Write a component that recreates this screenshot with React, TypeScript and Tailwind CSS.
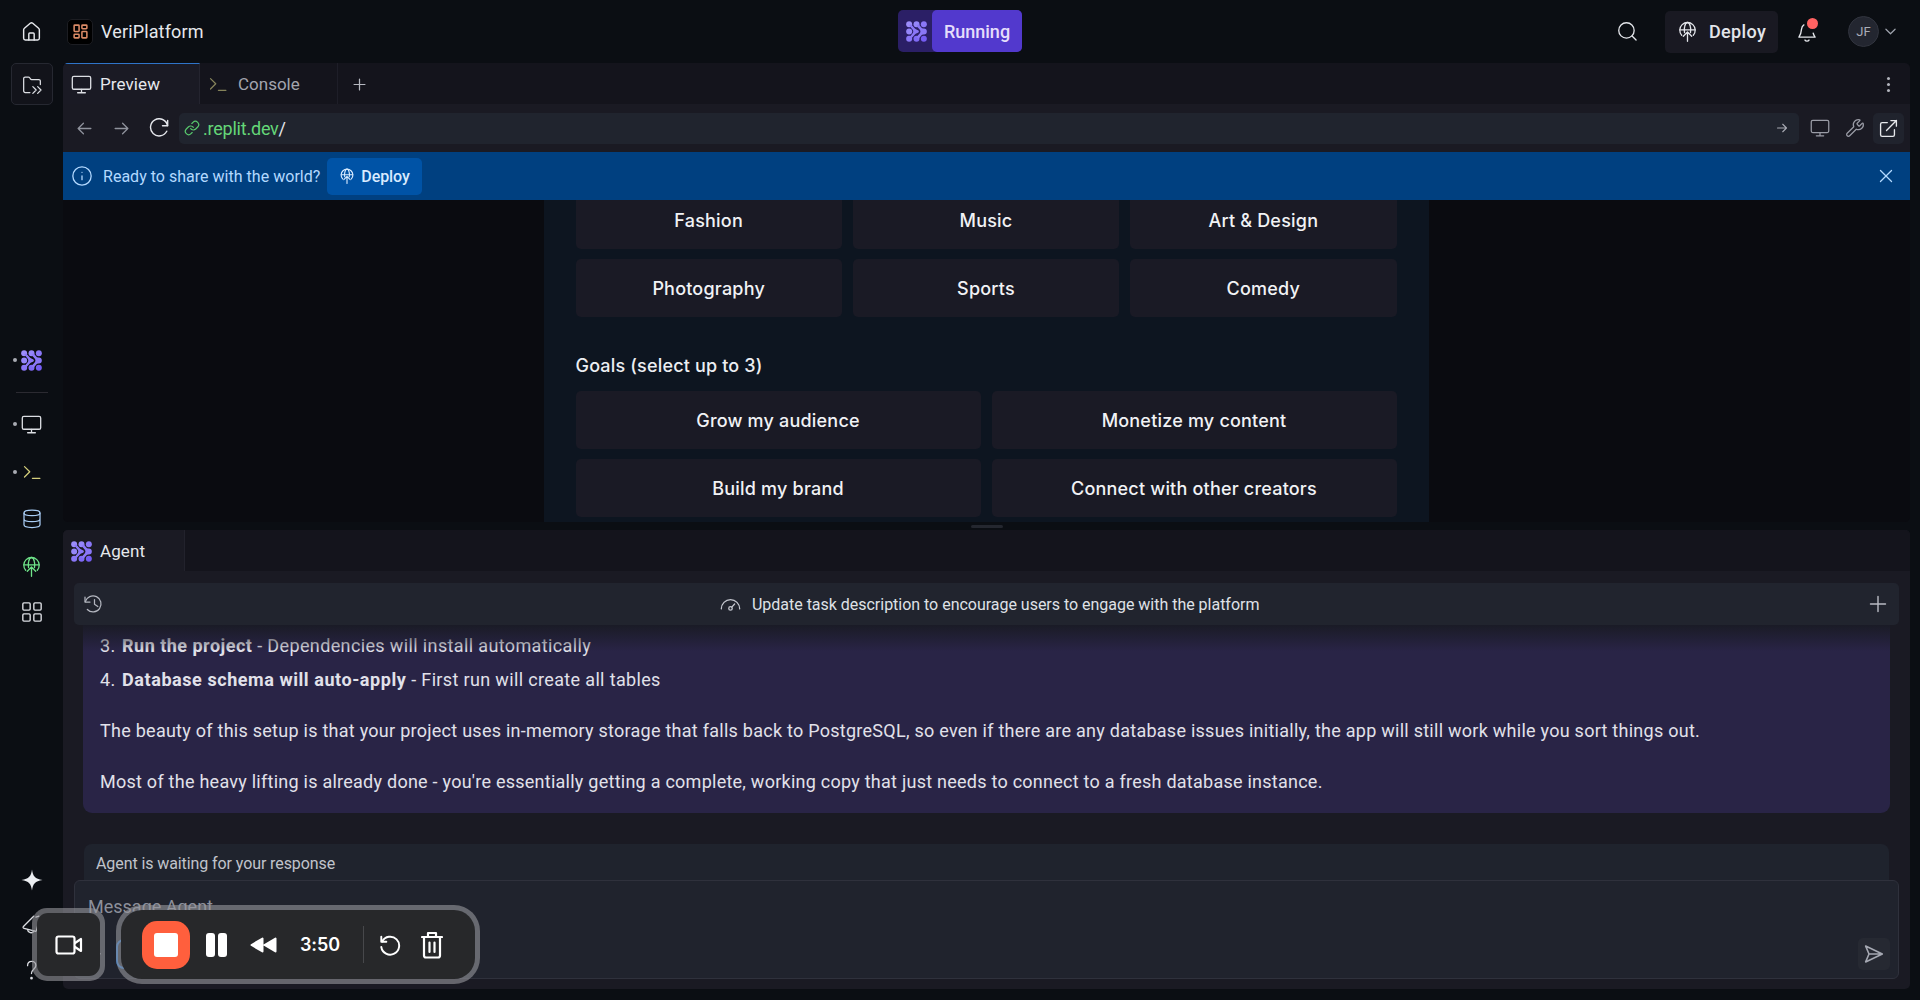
import type { ReactNode, SVGProps } from "react";
import { LayoutDashboard, Link, Wrench, Info, Paperclip } from "lucide-react";

type IconProps = SVGProps<SVGSVGElement>;

const Svg = ({ children, ...p }: IconProps) => (
  <svg
    viewBox="0 0 24 24"
    fill="none"
    stroke="currentColor"
    strokeWidth={1.5}
    strokeLinecap="round"
    strokeLinejoin="round"
    {...p}
  >
    {children}
  </svg>
);

const HomeIcon = (p: IconProps) => (
  <Svg {...p}>
    <path d="M3.8 10.2a2 2 0 0 1 .8-1.6L11 3.2a1.6 1.6 0 0 1 2 0l6.400 5.400a2 2 0 0 1 .8 1.600V19a1.800 1.800 0 0 1-1.800 1.800H5.600A1.800 1.800 0 0 1 3.800 19Z" />
    <path d="M9.200 20.800v-6.300a1 1 0 0 1 1-1h3.600a1 1 0 0 1 1 1v6.300" />
  </Svg>
);

const FolderArrowsIcon = (p: IconProps) => (
  <Svg {...p}>
    <path d="M9.500 21H3.800A1.800 1.800 0 0 1 2 19.200V4.300a1.800 1.800 0 0 1 1.800-1.800h3.900a1.800 1.800 0 0 1 1.500.8l.9 1.400a1.800 1.800 0 0 0 1.500.8h8.600A1.800 1.800 0 0 1 22 7.300v4.200" />
    <path d="m13 14 4 4-4 4M18.800 14l4 4-4 4" />
  </Svg>
);

const MonitorIcon = (p: IconProps) => (
  <Svg {...p}>
    <rect x="1.500" y="2.800" width="21" height="14.600" rx="1.800" />
    <path d="M12 17.600v3.600M7.600 21.400h8.800" />
  </Svg>
);

const PromptIcon = (p: IconProps) => (
  <Svg {...p}>
    <path d="m3 5.500 6.300 6.200L3 18M12.500 19.600h9" />
  </Svg>
);

const DatabaseIcon = (p: IconProps) => (
  <Svg {...p}>
    <ellipse cx="12" cy="4.700" rx="9.600" ry="3.200" />
    <path d="M2.400 5v14c0 1.800 4.300 3.200 9.600 3.200s9.600-1.400 9.600-3.200V5M2.400 12c0 1.800 4.300 3.200 9.600 3.200s9.600-1.400 9.600-3.200" />
  </Svg>
);

const GlobeUpIcon = (p: IconProps) => (
  <Svg {...p}>
    <path d="M5.400 16.300a8.800 8.800 0 1 1 13.200 0" />
    <path d="M3.400 10.200h17.200" />
    <path d="M8.600 13.200a16 16 0 0 1 .2-7.200C9.500 3 10.700 1.700 12 1.700s2.500 1.300 3.200 4.300a16 16 0 0 1 .2 7.200" />
    <path d="M12 23.200V12.600M7.200 17.400l4.800-4.800 4.800 4.800" />
  </Svg>
);

const AppsIcon = (p: IconProps) => (
  <Svg {...p}>
    <rect x="2" y="2" width="8" height="8" rx="1.200" />
    <rect x="14" y="2" width="8" height="8" rx="1.200" />
    <rect x="2" y="14" width="8" height="8" rx="1.200" />
    <rect x="14" y="14" width="8" height="8" rx="1.200" />
  </Svg>
);

const AgentLogo = (p: IconProps) => (
  <svg viewBox="0 0 20 20" {...p}>
    <g fill="#8a77f7" stroke="none">
      <circle cx="3" cy="3" r="2.850" fill="#9c8dfb" />
      <circle cx="10" cy="3" r="2.850" fill="#9586fa" />
      <circle cx="17" cy="3" r="2.850" />
      <circle cx="3" cy="10" r="2.850" fill="#9586fa" />
      <circle cx="3" cy="17" r="2.850" />
      <circle cx="10" cy="17" r="2.850" fill="#7f6af5" />
      <circle cx="17" cy="17" r="2.850" fill="#755df3" />
      <path d="M3 4.400 4.800 3 8 6.600c1 1.100 2 1.600 3.400 2.100a1.400 1.400 0 0 1 0 2.600C10 11.800 9 12.300 8 13.400L4.800 17 3 15.600l3.200-3.700c1-1.200 1-2.600 0-3.800Z" />
      <path d="M10 4.800 12 3l2.600 3.200c.6.700 1.200.9 2.400.95a2.850 2.850 0 0 1 0 5.700c-1.200.05-1.800.25-2.400.95L12 17l-2-1.800 3-3.300c1-1.200 1-2.600 0-3.800Z" />
    </g>
  </svg>
);

const HistoryIcon = (p: IconProps) => (
  <Svg {...p}>
    <path d="M1.200 3.600v6h6" />
    <path d="M1.600 9.200A9.600 9.600 0 1 1 4 18.600" />
    <path d="M12.600 6.600v5.800l4 2.600" />
  </Svg>
);

const GaugeIcon = (p: IconProps) => (
  <Svg {...p}>
    <path d="M1.500 17A10.500 10.500 0 0 1 22.500 17" />
    <circle cx="12" cy="16.500" r="2" />
    <path d="m13.500 15 3.200-3.600" />
  </Svg>
);

const BellIcon = (p: IconProps) => (
  <Svg {...p}>
    <path d="M8.600 4.200C6.800 5.300 6.200 7 6 9c-.3 4.200-1 6-2.800 8.600h17.600c-1-1.500-1.600-2.600-2-4.200" />
    <path d="M9.800 20.800c.9 1.500 3.500 1.500 4.400 0" />
  </Svg>
);

const ReloadIcon = (p: IconProps) => (
  <Svg {...p}>
    <path d="M22.400 3v6.200h-6.200" />
    <path d="M22.200 9A10.300 10.300 0 1 0 21.300 15.900" />
  </Svg>
);

const ArrowRight = (p: IconProps) => (
  <Svg {...p}>
    <path d="M3 12h18M13.500 4.500 21 12l-7.500 7.500" />
  </Svg>
);

const PlusIcon = (p: IconProps) => (
  <Svg {...p}>
    <path d="M12 2v20M2 12h20" />
  </Svg>
);

const Row = ({ h, dot, children }: { h: string; dot?: boolean; children: ReactNode }) => (
  <div className={`relative flex w-full items-center justify-center ${h}`}>
    {dot && <span className="absolute left-[13px] size-1 rounded-full bg-[#a9abb3]" />}
    {children}
  </div>
);

function Sidebar() {
  return (
    <aside className="flex w-[63px] shrink-0 flex-col items-center text-[#dcdee3]">
      <button className="flex size-[42px] items-center justify-center rounded-[5px] border border-[#262831] bg-[#12131a]">
        <FolderArrowsIcon className="mt-px size-[20px]" />
      </button>
      <div className="h-[231px]" />
      <Row h="h-12" dot>
        <AgentLogo className="size-[21px]" />
      </Row>
      <div className="flex h-4 items-center">
        <div className="h-px w-8 bg-[#2b2a31]" />
      </div>
      <Row h="h-12" dot>
        <MonitorIcon className="size-[21px]" />
      </Row>
      <Row h="h-12" dot>
        <PromptIcon className="size-[20px] text-[#d5cf7c]" />
      </Row>
      <Row h="h-[46px]">
        <DatabaseIcon className="size-[20px] text-[#a9cdf5]" />
      </Row>
      <Row h="h-12">
        <GlobeUpIcon className="size-[21px] text-[#6fe389]" />
      </Row>
      <Row h="h-[43px]">
        <AppsIcon className="size-[22px]" />
      </Row>
      <div className="flex-1" />
      <Row h="h-11">
        <svg viewBox="0 0 24 24" className="size-[22px]" fill="#eceef2">
          <path d="M12 .5c.9 7.200 3.300 10.300 11.500 11.500C15.300 13.200 12.900 16.300 12 23.500 11.100 16.300 8.700 13.200.5 12 8.700 10.800 11.100 7.700 12 .5Z" />
        </svg>
      </Row>
      <Row h="h-11">
        <Svg className="size-[21px]">
          <path d="M14.500 2.500 2.800 14.200c-.8.900-.5 2 .7 2.300l12.500 3.200c1 .2 1.600-.2 1.800-1.200L21 6" />
          <path d="M7.500 17.800a4 4 0 0 0 7.300 1.800M17 3.500l3.500-1" />
        </Svg>
      </Row>
      <Row h="h-12">
        <Svg className="size-[21px]">
          <path d="M7.500 6.500C7.500 3.500 9.500 1.500 12.200 1.500s4.800 2 4.800 4.700c0 4-5 4.300-5 9.300" />
          <circle cx="12" cy="20.800" r=".8" fill="currentColor" />
        </Svg>
      </Row>
      <div className="h-[6px]" />
    </aside>
  );
}

function Header() {
  return (
    <header className="grid h-[63px] shrink-0 grid-cols-[1fr_auto_1fr] items-start">
      <div className="flex h-[63px] items-center">
        <div className="flex w-[63px] justify-center">
          <HomeIcon className="size-[23px] text-[#e6e8ec]" />
        </div>
        <div className="ml-1 flex size-[26px] items-center justify-center rounded-[5px] border border-[#1c1d22] bg-black">
          <LayoutDashboard className="size-[17px] text-[#d98a66]" strokeWidth={2.2} />
        </div>
        <span className="ml-2 text-[18px] tracking-[0.140px] text-[#e6e8ec]">VeriPlatform</span>
      </div>
      <div className="mt-[10px] flex h-[42px] w-[124px] rounded-[5px] bg-[#2b1f66]">
        <div className="flex w-[34px] items-center justify-center pl-[3px]">
          <AgentLogo className="size-[21px]" />
        </div>
        <div className="flex flex-1 items-center justify-center rounded-[5px] bg-[#5239cd]">
          <span className="text-[18px] font-medium text-[#e5defb]">Running</span>
        </div>
      </div>
      <div className="flex h-[63px] items-center justify-end text-[#e3e5ea]">
        <Svg className="mr-[27px] size-[21px]">
          <circle cx="10.800" cy="10.800" r="8.800" />
          <path d="m17.200 17.200 4.600 4.600" />
        </Svg>
        <button className="flex h-[42px] w-[113px] items-center rounded-[5px] bg-[#191922] pl-3">
          <GlobeUpIcon className="size-[21px]" />
          <span className="ml-[11px] text-[18px] font-medium tracking-[0.34px]">Deploy</span>
        </button>
        <div className="relative ml-[18px] size-[22px]">
          <BellIcon className="size-[22px]" />
          <span className="absolute -top-[3px] left-[10.500px] size-[11px] rounded-full bg-[#ff6262]" />
        </div>
        <div className="ml-[30px] flex size-[31px] items-center justify-center rounded-full border border-[#31343e] bg-[#232630] text-[13px] text-[#aaaeb8]">
          JF
        </div>
        <Svg className="mr-[24px] ml-[6px] size-[11px] text-[#a0a4ae]" strokeWidth={2.600}>
          <path d="m2 7 10 10L22 7" />
        </Svg>
      </div>
    </header>
  );
}

const Choice = ({ children }: { children: ReactNode }) => (
  <button className="flex h-[58px] items-center justify-center rounded-[5px] bg-[#1a1a25] font-[Inter] text-[18px] font-medium tracking-[0.2px] text-[#f1f2f5]">
    {children}
  </button>
);

function PreviewPane() {
  return (
    <section className="flex h-[459px] shrink-0 flex-col overflow-hidden rounded-[5px] bg-[#0a0b10]">
      <div className="flex h-[41px] shrink-0 bg-[#14141c]">
        <div className="flex w-[137px] items-center border-t border-r border-t-[#2f74c8] border-r-[#24242f] bg-[#1a1a24] pl-2">
          <MonitorIcon className="size-[21px] text-[#dcdee3]" />
          <span className="ml-2 pt-[2px] text-[17px] tracking-[0.090px] text-[#e6e8ec]">Preview</span>
        </div>
        <div className="flex w-[138px] items-center border-r border-[#1e1e28] pl-2">
          <PromptIcon className="size-[20px] text-[#85835a]" />
          <span className="ml-[10px] pt-[2px] text-[17px] text-[#a3a5ae]">Console</span>
        </div>
        <PlusIcon className="mt-[15px] ml-[15px] size-[13px] text-[#b6b8c0]" strokeWidth={2.300} />
        <div className="mt-[14px] mr-5 ml-auto flex flex-col gap-[3px]">
          <span className="size-[3px] rounded-full bg-[#b3b5bd]" />
          <span className="size-[3px] rounded-full bg-[#b3b5bd]" />
          <span className="size-[3px] rounded-full bg-[#b3b5bd]" />
        </div>
      </div>
      <div className="flex h-12 shrink-0 items-center bg-[#1a1a23]">
        <ArrowRight className="ml-[13px] size-[17px] rotate-180 text-[#8f929c]" strokeWidth={1.800} />
        <ArrowRight className="ml-[20px] size-[17px] text-[#8f929c]" strokeWidth={1.800} />
        <ReloadIcon className="ml-[19px] size-[20px] text-[#e3e5ea]" strokeWidth={1.700} />
        <div className="ml-[10px] flex h-[31px] w-[1620px] items-center rounded-[5px] bg-[#20242e] pl-[5px]">
          <Link className="size-4 text-[#58c96d]" strokeWidth={1.800} />
          <span className="ml-[3px] text-[18px] tracking-[-0.220px] text-[#e3e5ea]">
            <span className="text-[#64d678]">.replit.dev</span>/
          </span>
          <ArrowRight className="mr-[11px] ml-auto size-[12px] text-[#a7a9b2]" strokeWidth={2.200} />
        </div>
        <MonitorIcon className="ml-[11px] size-[20px] text-[#9a9ca6]" />
        <Wrench className="ml-[15px] size-[20px] text-[#9a9ca6]" strokeWidth={1.500} />
        <div className="ml-[8px] flex h-[31px] w-[31px] items-center justify-center rounded-[5px] bg-[#20232d]">
          <Svg className="size-[19px] text-[#e6e8ec]" strokeWidth={1.700}>
            <path d="M10.500 4.500H4A2 2 0 0 0 2 6.500V20a2 2 0 0 0 2 2h13.500a2 2 0 0 0 2-2v-6.500M15 2h7v7M22 2 9.500 14.500" />
          </Svg>
        </div>
      </div>
      <div className="flex h-12 shrink-0 items-center bg-[#004080] text-[#b3d9ff]">
        <Info className="ml-2 size-[22px]" strokeWidth={1.400} />
        <span className="ml-[10px] pt-[2px] text-[16px] tracking-[0.020px]">Ready to share with the world?</span>
        <button className="ml-[7px] flex h-[37px] w-[95px] items-center rounded-[5px] bg-[#0053a6] pl-[12px] text-[#d8ebff]">
          <GlobeUpIcon className="size-[16px]" strokeWidth={1.700} />
          <span className="ml-[6px] pt-px text-[16px] font-medium tracking-[-0.100px]">Deploy</span>
        </button>
        <Svg className="mr-[17px] ml-auto size-[14px]" strokeWidth={2.200}>
          <path d="m2.500 2.500 19 19M21.500 2.500l-19 19" />
        </Svg>
      </div>
      <div className="flex min-h-0 flex-1 justify-center overflow-hidden">
        <div className="mr-[1px] w-[885px] bg-[#0d1520] px-8">
          <div className="-mt-[9px] grid grid-cols-3 gap-x-[11px] gap-y-[10px]">
            <Choice>Fashion</Choice>
            <Choice>Music</Choice>
            <Choice>Art &amp; Design</Choice>
            <Choice>Photography</Choice>
            <Choice>Sports</Choice>
            <Choice>Comedy</Choice>
          </div>
          <h2 className="mt-[34px] mb-[11px] font-[Inter] text-[18px] leading-[29px] font-medium tracking-[0.170px] text-[#eceef2]">
            Goals (select up to 3)
          </h2>
          <div className="grid grid-cols-2 gap-x-[11px] gap-y-[10px]">
            <Choice>Grow my audience</Choice>
            <Choice>Monetize my content</Choice>
            <Choice>Build my brand</Choice>
            <Choice>Connect with other creators</Choice>
          </div>
        </div>
      </div>
    </section>
  );
}

function AgentPane() {
  return (
    <section className="flex min-h-0 flex-1 flex-col overflow-hidden rounded-[5px] bg-[#1a1a23]">
      <div className="flex h-[41px] shrink-0 bg-[#14141c]">
        <div className="flex w-[122px] items-center border-r border-[#22222c] bg-[#1a1a23] pt-[2px] pl-2">
          <AgentLogo className="size-[21px]" />
          <span className="ml-2 text-[17px] tracking-[0.100px] text-[#e6e8ec]">Agent</span>
        </div>
      </div>
      <div className="relative z-10 mx-[11px] mt-3 flex h-[42px] shrink-0 items-center rounded-[5px] bg-[#21242e]">
        <HistoryIcon className="ml-[10px] size-[20px] text-[#b3b6bf]" />
        <div className="ml-[616px] flex items-center">
          <GaugeIcon className="size-[21px] text-[#c3c6ce]" />
          <span className="ml-[11px] pt-px text-[16px] tracking-[-0.020px] text-[#dfe1e6]">
            Update task description to encourage users to engage with the platform
          </span>
        </div>
        <PlusIcon className="mr-[12px] ml-auto size-[18px] text-[#b9bbc3]" strokeWidth={1.900} />
        <div className="absolute inset-x-[9px] top-full h-[26px] bg-linear-to-b from-[#1a1b26] to-transparent" />
      </div>
      <div className="mx-5 h-[188px] shrink-0 rounded-b-[9px] bg-[#292446] pt-[4px] pl-[17px] text-[18px] tracking-[0.260px] whitespace-nowrap text-[#e1e1ea]">
        <ol className="leading-[34px]">
          <li>
            <span className="mr-[2px]">3. </span>
            <b className="tracking-[0.480px]">Run the project</b>
            <span className="tracking-[0.370px]"> - Dependencies will install automatically</span>
          </li>
          <li>
            <span className="mr-[2px]">4. </span>
            <b className="tracking-[0.560px]">Database schema will auto-apply</b>
            <span className="tracking-[0.350px]"> - First run will create all tables</span>
          </li>
        </ol>
        <p className="mt-[19px] leading-[30px]">
          The beauty of this setup is that your project uses in-memory storage that falls back to PostgreSQL, so even if
          there are any database issues initially, the app will still work while you sort things out.
        </p>
        <p className="mt-[21px] leading-[30px] tracking-[0.250px]">
          Most of the heavy lifting is already done - you're essentially getting a complete, working copy that just needs
          to connect to a fresh database instance.
        </p>
      </div>
      <div className="mx-[21px] mt-[31px] flex h-[36px] shrink-0 items-center rounded-t-[8px] bg-[#1f232d] pl-[12px]">
        <span className="pt-[3px] text-[16px] tracking-[-0.090px] text-[#c0c3cb]">Agent is waiting for your response</span>
      </div>
      <div className="mx-[11px] flex h-[99px] shrink-0 flex-col rounded-[6px] border border-[#2f313c] bg-[#20232d]">
        <span className="mt-[12px] ml-[13px] text-[18px] leading-[28px] text-[#8d909b]">Message Agent</span>
        <div className="mt-auto mb-[8px] flex items-center">
          <Paperclip className="ml-[7px] size-[20px] text-[#c0c3cb]" strokeWidth={1.500} />
          <span className="ml-[14px] size-[30px] rounded-[8px] border-2 border-[#2372c9]" />
          <button className="mr-[8px] ml-auto flex size-8 items-center justify-center rounded-[5px] bg-[#262932]">
            <Svg className="size-[20px] text-[#a5a8b2]" strokeWidth={1.900}>
              <path d="M2 2.500 22 12 2 21.500 6 12ZM6 12h15" />
            </Svg>
          </button>
        </div>
      </div>
    </section>
  );
}

function RecorderOverlay() {
  return (
    <div className="absolute top-[905px] left-8 flex items-center gap-[11px] text-white">
      <div className="h-[73px] w-[73px] rounded-[15px] bg-[#97979c]/60 p-[5px]">
        <div className="flex size-full items-center justify-center rounded-[11px] bg-[#27282a]">
          <Svg className="h-[22px] w-[28px]" viewBox="0 0 28 22" strokeWidth={2.200}>
            <rect x="1.500" y="2.500" width="18" height="17" rx="2" />
            <path d="m20 9 6-4v12l-6-4" />
          </Svg>
        </div>
      </div>
      <div className="h-[79px] w-[364px] rounded-[26px] bg-[#97979c]/60 p-[5px]">
        <div className="flex size-full items-center rounded-[21px] bg-[#27282a] pl-[21px]">
          <div className="flex size-12 items-center justify-center rounded-[15px] bg-[#ff5f3d]">
            <div className="size-6 rounded-[3px] bg-white" />
          </div>
          <div className="ml-4 flex gap-[3px]">
            <span className="h-6 w-[9px] rounded-[3px] bg-white" />
            <span className="h-6 w-[9px] rounded-[3px] bg-white" />
          </div>
          <svg viewBox="0 0 27 16" className="ml-[23px] h-4 w-[27px]" fill="white" stroke="white" strokeWidth="2" strokeLinejoin="round">
            <path d="M1.500 8 12.500 1.500v13ZM14.500 8 25.500 1.500v13Z" />
          </svg>
          <span className="ml-[23px] w-[41px] font-[Inter] text-[18px] font-semibold tracking-[-0.100px]">3:50</span>
          <span className="ml-[22px] h-[37px] w-px bg-[#47484b]" />
          <Svg className="ml-[15px] size-[22px]" strokeWidth={2.100}>
            <path d="M2.500 3v5.500H8" />
            <path d="M3.500 8.200a9.800 9.800 0 1 1-1 6" />
          </Svg>
          <Svg className="ml-[20px] h-[28px] w-[22px]" viewBox="0 0 22 28" strokeWidth={2.200}>
            <path d="M1 6h20M7 5.500V2h8v3.500M3 6.500v18a2 2 0 0 0 2 2h12a2 2 0 0 0 2-2v-18M8.500 11.500v9.500M13.500 11.500v9.500" />
          </Svg>
        </div>
      </div>
    </div>
  );
}

export default function App() {
  return (
    <div className="relative flex h-[1000px] w-[1920px] flex-col overflow-hidden bg-[#0b0e13] font-[Roboto,sans-serif]">
      <Header />
      <div className="flex min-h-0 flex-1">
        <Sidebar />
        <main className="flex w-[1847px] flex-col pb-[11px] [&_button]:cursor-pointer">
          <PreviewPane />
          <div className="flex h-2 shrink-0 items-center justify-center">
            <span className="h-[3px] w-8 rounded-full bg-[#24272f]" />
          </div>
          <AgentPane />
        </main>
      </div>
      <RecorderOverlay />
    </div>
  );
}
